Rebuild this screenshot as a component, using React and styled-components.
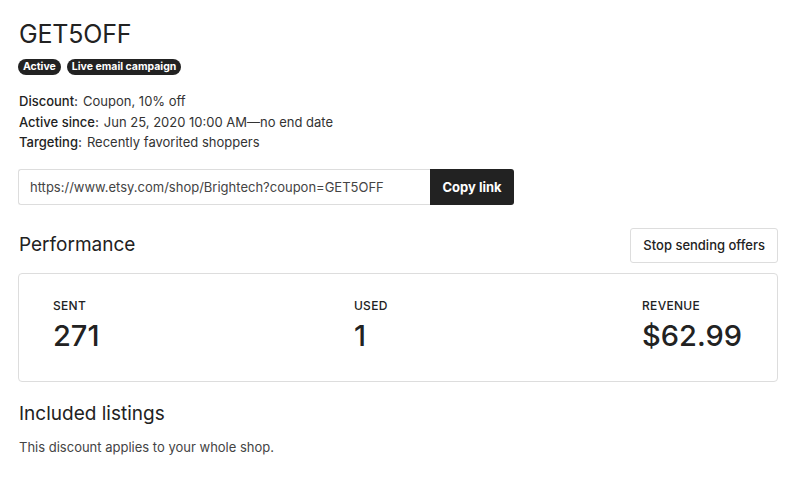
import React from "react";
import styled, { createGlobalStyle } from "styled-components";

const Global = createGlobalStyle`
  html, body { margin: 0; padding: 0; background: #fff; }
  body { font-family: Inter, "Noto Sans", Arial, sans-serif; color: #222; -webkit-font-smoothing: antialiased; }
  * { box-sizing: border-box; }
`;

const Page = styled.div`
  padding: 18px 22px 20px 18px;
  display: flex;
  flex-direction: column;
`;

const Title = styled.h1`
  margin: 0 0 0 1px;
  font-size: 25px;
  font-weight: 400;
  line-height: 32px;
  letter-spacing: -0.2px;
`;

const Badges = styled.div`
  display: flex;
  gap: 6px;
  margin-top: 9px;
`;

const Badge = styled.span`
  background: #222;
  color: #fff;
  font-size: 10.5px;
  font-weight: 700;
  line-height: 16px;
  height: 16px;
  padding: 0 5px;
  border-radius: 8px;
`;

const Details = styled.div`
  margin-top: 16px;
  display: flex;
  flex-direction: column;
  margin-left: 1px;
`;

const DetailRow = styled.div`
  font-size: 13px;
  line-height: 20.5px;
  color: #333;
`;

const Label = styled.span`
  font-weight: 500;
  color: #222;
  margin-right: 5px;
`;

const LinkRow = styled.div`
  display: flex;
  margin-top: 16px;
  width: 496px;
`;

const UrlField = styled.div`
  flex: 1;
  height: 36px;
  border: 1px solid #ddd;
  border-right: none;
  border-radius: 3px 0 0 3px;
  padding: 0 11px;
  display: flex;
  align-items: center;
  font-size: 13px;
  color: #444;
`;

const DarkButton = styled.button`
  width: 84px;
  height: 36px;
  background: #222;
  color: #fff;
  border: none;
  border-radius: 0 3px 3px 0;
  font-family: inherit;
  font-size: 13px;
  font-weight: 700;
`;

const SectionHead = styled.div`
  display: flex;
  justify-content: space-between;
  align-items: center;
  margin-top: 23px;
`;

const H2 = styled.h2`
  margin: 0 0 0 1px;
  font-size: 19px;
  font-weight: 400;
  line-height: 24px;
`;

const OutlineButton = styled.button`
  height: 35px;
  padding: 0 12px;
  background: #fff;
  border: 1px solid #ddd;
  border-radius: 3px;
  font-family: inherit;
  font-size: 13px;
  font-weight: 500;
  color: #222;
`;

const Card = styled.div`
  margin-top: 10px;
  border: 1px solid #ddd;
  border-radius: 4px;
  height: 109px;
  padding: 24px 35px 0 34px;
  display: flex;
  justify-content: space-between;
  align-items: flex-start;
`;

const Stat = styled.div`
  display: flex;
  flex-direction: column;
`;

const StatLabel = styled.div`
  font-size: 12px;
  font-weight: 500;
  line-height: 16px;
  letter-spacing: 0.3px;
`;

const StatValue = styled.div`
  font-size: 29px;
  font-weight: 500;
  line-height: 36px;
  margin-top: 4px;
`;

const ListingsHead = styled(H2)`
  margin-top: 20px;
`;

const Note = styled.p`
  margin: 12px 0 0 1px;
  font-size: 13px;
  line-height: 18px;
  color: #444;
`;

export default function App() {
  return (
    <>
      <Global />
      <Page>
        <Title>GET5OFF</Title>
        <Badges>
          <Badge>Active</Badge>
          <Badge>Live email campaign</Badge>
        </Badges>
        <Details>
          <DetailRow><Label>Discount:</Label>Coupon, 10% off</DetailRow>
          <DetailRow><Label>Active since:</Label>Jun 25, 2020 10:00 AM—no end date</DetailRow>
          <DetailRow><Label>Targeting:</Label>Recently favorited shoppers</DetailRow>
        </Details>
        <LinkRow>
          <UrlField>https://www.etsy.com/shop/Brightech?coupon=GET5OFF</UrlField>
          <DarkButton>Copy link</DarkButton>
        </LinkRow>
        <SectionHead>
          <H2>Performance</H2>
          <OutlineButton>Stop sending offers</OutlineButton>
        </SectionHead>
        <Card>
          <Stat><StatLabel>SENT</StatLabel><StatValue>271</StatValue></Stat>
          <Stat><StatLabel>USED</StatLabel><StatValue>1</StatValue></Stat>
          <Stat><StatLabel>REVENUE</StatLabel><StatValue>$62.99</StatValue></Stat>
        </Card>
        <ListingsHead>Included listings</ListingsHead>
        <Note>This discount applies to your whole shop.</Note>
      </Page>
    </>
  );
}
